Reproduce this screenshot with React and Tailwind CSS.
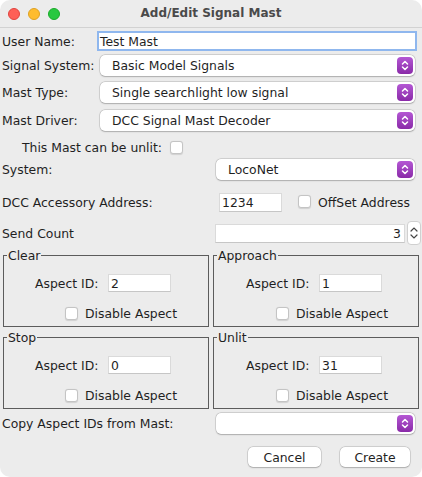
function Chevrons() {
  return (
    <svg width="8" height="11" viewBox="0 0 8 11">
      <path
        d="M1.5 4 L4 1.5 L6.5 4 M1.5 7 L4 9.5 L6.5 7"
        stroke="white"
        strokeWidth="1.5"
        fill="none"
        strokeLinecap="round"
        strokeLinejoin="round"
      />
    </svg>
  )
}

function Combo({ value, className }) {
  return (
    <div
      className={
        "h-[21px] bg-white rounded-[5px] shadow-[0_0_0_0.5px_rgba(0,0,0,0.18),0_0.5px_1.5px_rgba(0,0,0,0.2)] flex items-center pl-[12px] pr-[2px] " +
        className
      }
    >
      <span className="flex-1 truncate">{value}</span>
      <span className="w-[16px] h-[17px] rounded-[4px] bg-gradient-to-b from-[#b457d4] to-[#8a2aa8] flex items-center justify-center">
        <Chevrons />
      </span>
    </div>
  )
}

function Check() {
  return (
    <span className="inline-block w-[13px] h-[13px] rounded-[3px] bg-white border border-[#c4c4c4] shadow-[0_0.5px_1px_rgba(0,0,0,0.12)]" />
  )
}

function Field({ value, className }) {
  return (
    <div
      className={
        "bg-white border border-[#dadada] border-b-[#c6c6c6] flex items-center px-[2px] " +
        className
      }
    >
      {value}
    </div>
  )
}

function Panel({ title, id, labelPad, checkPad }) {
  return (
    <fieldset className="flex-1 border border-[#5c5c5c] pb-[4px]">
      <legend className="ml-[3px] px-[1px] h-[15px] leading-[15px]">{title}</legend>
      <div className={"mt-[11px] h-[18px] flex items-center " + labelPad}>
        <span className="w-[73px]">Aspect ID:</span>
        <Field value={id} className="w-[63px] h-[18px]" />
      </div>
      <div className={"mt-[12px] h-[18px] flex items-center gap-[7px] " + checkPad}>
        <Check />
        <span>Disable Aspect</span>
      </div>
    </fieldset>
  )
}

export default function App() {
  return (
    <div className="w-[422px] h-[477px] bg-white">
      <div
        className="w-[422px] h-[477px] bg-[#ececec] rounded-[10px] overflow-hidden text-[12.4px] text-[#1f1f1f] leading-[15px]"
        style={{ fontFamily: '"DejaVu Sans", sans-serif' }}
      >
        {/* title bar */}
        <div className="h-[28px] border-b border-[#d2d2d2] flex items-center relative">
          <div className="flex gap-[8px] pl-[8px]">
            <span className="w-[12px] h-[12px] rounded-full bg-[#fe5f57] border border-[#e0443e]" />
            <span className="w-[12px] h-[12px] rounded-full bg-[#febc2e] border border-[#dea123]" />
            <span className="w-[12px] h-[12px] rounded-full bg-[#28c840] border border-[#1aab29]" />
          </div>
          <div className="absolute inset-0 flex items-center justify-center font-bold text-[12px] text-[#4a4a4a]">
            Add/Edit Signal Mast
          </div>
        </div>

        <div className="mt-[3px] h-[20px] flex items-center pl-[2px]">
          <span className="w-[97px]">User Name:</span>
          <div className="w-[316px] h-[16px] bg-white ring-2 ring-[#8fb7ee] flex items-center pl-[1px] ml-[-0px]">
            Test Mast
          </div>
        </div>

        <div className="mt-[4px] flex items-center pl-[2px]">
          <span className="w-[98px]">Signal System:</span>
          <Combo value="Basic Model Signals" className="w-[315px]" />
        </div>
        <div className="mt-[6px] flex items-center pl-[2px]">
          <span className="w-[98px]">Mast Type:</span>
          <Combo value="Single searchlight low signal" className="w-[315px]" />
        </div>
        <div className="mt-[7px] flex items-center pl-[2px]">
          <span className="w-[98px]">Mast Driver:</span>
          <Combo value="DCC Signal Mast Decoder" className="w-[315px]" />
        </div>

        <div className="mt-[7px] h-[18px] flex items-center pl-[22px] gap-[8px]">
          <span>This Mast can be unlit:</span>
          <Check />
        </div>

        <div className="mt-[3px] flex items-center pl-[2px]">
          <span className="w-[214px]">System:</span>
          <Combo value="LocoNet" className="w-[199px]" />
        </div>

        <div className="mt-[13px] h-[19px] flex items-center pl-[2px]">
          <span className="w-[217px]">DCC Accessory Address:</span>
          <Field value="1234" className="w-[63px] h-[19px]" />
          <span className="ml-[16px]">
            <Check />
          </span>
          <span className="ml-[7px]">OffSet Address</span>
        </div>

        <div className="mt-[11px] h-[20px] flex items-center pl-[2px]">
          <span className="w-[213px]">Send Count</span>
          <Field value="3" className="w-[190px] h-[19px] justify-end pr-[3px]" />
          <div className="ml-[2px] w-[14px] h-[24px] rounded-[4px] bg-white border border-[#d0d0d0] flex flex-col items-center justify-center gap-[2px]">
            <svg width="8" height="5" viewBox="0 0 8 5">
              <path d="M1 4 L4 1 L7 4" stroke="#444" strokeWidth="1.2" fill="none" strokeLinecap="round" />
            </svg>
            <svg width="8" height="5" viewBox="0 0 8 5">
              <path d="M1 1 L4 4 L7 1" stroke="#444" strokeWidth="1.2" fill="none" strokeLinecap="round" />
            </svg>
          </div>
        </div>

        <div className="mt-[5px] flex gap-[4px] pl-[3px] pr-[3px]">
          <Panel title="Clear" id="2" labelPad="pl-[31px]" checkPad="pl-[61px]" />
          <Panel title="Approach" id="1" labelPad="pl-[32px]" checkPad="pl-[62px]" />
        </div>
        <div className="mt-[3px] flex gap-[4px] pl-[3px] pr-[3px]">
          <Panel title="Stop" id="0" labelPad="pl-[31px]" checkPad="pl-[61px]" />
          <Panel title="Unlit" id="31" labelPad="pl-[32px]" checkPad="pl-[62px]" />
        </div>

        <div className="mt-[4px] flex items-center pl-[2px]">
          <span className="w-[214px]">Copy Aspect IDs from Mast:</span>
          <Combo value="" className="w-[199px]" />
        </div>

        <div className="mt-[13px] flex justify-end gap-[19px] pr-[12px]">
          <button className="w-[73px] h-[20px] bg-white rounded-[5px] shadow-[0_0_0_0.5px_rgba(0,0,0,0.18),0_0.5px_1.5px_rgba(0,0,0,0.2)]">
            Cancel
          </button>
          <button className="w-[70px] h-[20px] bg-white rounded-[5px] shadow-[0_0_0_0.5px_rgba(0,0,0,0.18),0_0.5px_1.5px_rgba(0,0,0,0.2)]">
            Create
          </button>
        </div>
      </div>
    </div>
  )
}
